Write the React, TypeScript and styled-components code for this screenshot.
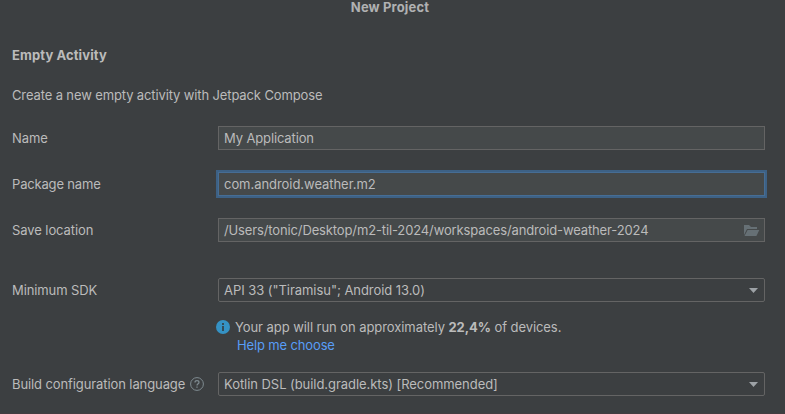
import React from 'react';
import styled, { createGlobalStyle } from 'styled-components';

const GlobalStyle = createGlobalStyle`
  * { box-sizing: border-box; }
  body { margin: 0; background: #3c3f41; }
`;

const Dialog = styled.main`
  width: 785px;
  height: 414px;
  overflow: hidden;
  background: #3c3f41;
  border-bottom: 1px solid #433c40;
  color: #bbbbbb;
  font: 13px/16px Inter, sans-serif;
  white-space: nowrap;
`;

const TitleBar = styled.header`
  height: 48px;
  margin-top: -1px;
  padding-right: 5px;
  text-align: center;
  font-weight: 700;
  color: #b0b1b2;
`;

const Heading = styled.h1`
  margin: 0 0 24px 12px;
  font-size: 13px;
  line-height: 16px;
  font-weight: 700;
`;

const Description = styled.p`
  margin: 0 0 23px 12px;
`;

const Track = styled.span<{ $ls?: number }>`
  letter-spacing: ${p => p.$ls ?? 0}px;
`;

const Row = styled.div<{ $gap: number }>`
  display: grid;
  grid-template-columns: 206px 547px;
  align-items: center;
  height: 24px;
  margin: 0 0 ${p => p.$gap}px 12px;
`;

const Label = styled.label`
  display: flex;
  align-items: center;
  gap: 5px;
`;

const Field = styled.div<{ $focused?: boolean }>`
  display: flex;
  align-items: center;
  justify-content: space-between;
  height: 24px;
  padding: 0 4px 0 5px;
  border: 1px solid ${p => (p.$focused ? '#466d94' : '#646464')};
  background: #45494a;
  box-shadow: ${p => (p.$focused ? '0 0 0 2px #3d6185' : 'none')};
`;

const Select = styled(Field)`
  padding-right: 6px;
  border-radius: 2px;
  background: #3c3f41;
`;

const Hint = styled.section`
  height: 70px;
  padding: 17px 0 0 216px;
`;

const HintLine = styled.div`
  display: flex;
  align-items: center;
  gap: 5px;
  height: 16px;
`;

const HelpLink = styled.a`
  display: block;
  margin: 2px 0 0 21px;
  color: #589df6;
`;

const FolderIcon = () => (
  <svg width="16" height="16" viewBox="0 0 16 16" fill="#667075">
    <path d="M0 13V3H5L7 5H13V7H3L0 13Z" />
    <path d="M3.6 8H15.3L12.4 14H0.5Z" />
  </svg>
);

const Arrow = () => (
  <svg width="9" height="6" viewBox="0 0 9 6">
    <path d="M0 1H9L4.5 6Z" fill="#9da2a6" />
  </svg>
);

const InfoIcon = () => (
  <svg width="14" height="14" viewBox="0 0 14 14">
    <circle cx="7" cy="7" r="7" fill="#3592c4" />
    <path d="M6 3h2v2H6zM6 6h2v5H6z" fill="#344b57" />
  </svg>
);

const HelpIcon = () => (
  <svg width="14" height="14" viewBox="0 0 14 14" fill="none" stroke="#7f8b91">
    <circle cx="7" cy="7" r="6.4" />
    <path d="M5 5.5C5 4.4 5.8 3.7 7 3.7s2 .7 2 1.7C9 6.7 7 6.7 7 8.5" strokeWidth="1.2" />
    <path d="M7 9.6v1.2" strokeWidth="1.3" />
  </svg>
);

export default function App() {
  return (
    <>
      <GlobalStyle />
      <Dialog>
        <TitleBar><Track $ls={0.15}>New Project</Track></TitleBar>
        <Heading><Track $ls={0.1}>Empty Activity</Track></Heading>
        <Description><Track $ls={-0.125}>Create a new empty activity with Jetpack Compose</Track></Description>
        <Row $gap={22}>
          <Label><Track $ls={-0.1}>Name</Track></Label>
          <Field><Track $ls={-0.13}>My Application</Track></Field>
        </Row>
        <Row $gap={22}>
          <Label><Track $ls={-0.17}>Package name</Track></Label>
          <Field $focused><Track $ls={-0.05}>com.android.weather.m2</Track></Field>
        </Row>
        <Row $gap={36}>
          <Label><Track $ls={-0.08}>Save location</Track></Label>
          <Field>
            <Track $ls={-0.13}>/Users/tonic/Desktop/m2-til-2024/workspaces/android-weather-2024</Track>
            <FolderIcon />
          </Field>
        </Row>
        <Row $gap={0}>
          <Label><Track $ls={-0.1}>Minimum SDK</Track></Label>
          <Select><Track $ls={-0.05}>API 33 ("Tiramisu"; Android 13.0)</Track><Arrow /></Select>
        </Row>
        <Hint>
          <HintLine>
            <InfoIcon />
            <Track $ls={-0.065}>Your app will run on approximately <b>22,4%</b> of devices.</Track>
          </HintLine>
          <HelpLink><Track $ls={-0.14}>Help me choose</Track></HelpLink>
        </Hint>
        <Row $gap={0}>
          <Label><Track $ls={-0.1}>Build configuration language</Track><HelpIcon /></Label>
          <Select><Track $ls={-0.055}>Kotlin DSL (build.gradle.kts) [Recommended]</Track><Arrow /></Select>
        </Row>
      </Dialog>
    </>
  );
}
